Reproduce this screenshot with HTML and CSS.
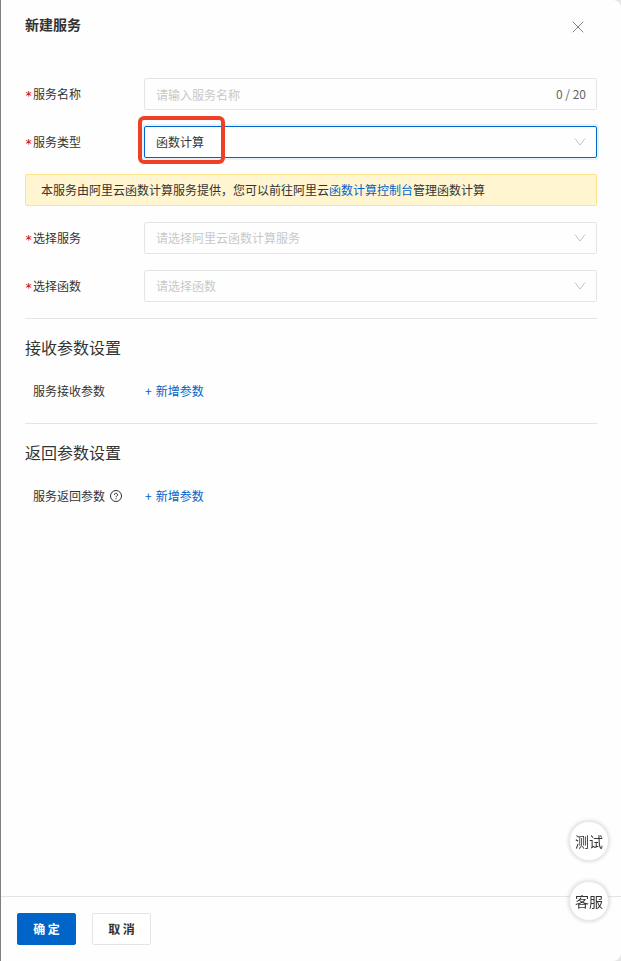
FILE: index.html
```html
<!DOCTYPE html>
<html lang="zh-CN">
<head>
    <meta charset="UTF-8">
    <meta name="viewport" content="width=device-width, initial-scale=1.0">
    <title>新建服务</title>
    <link rel="stylesheet" href="styles.css">
</head>
<body>
    <form class="drawer">
        <header class="drawer-header">
            <h1 class="drawer-title">新建服务</h1>
            <button type="button" class="btn-close" aria-label="关闭">
                <svg width="12" height="12" viewBox="0 0 12 12"><path d="M.7.7l10.6 10.6M11.3.7L.7 11.3"/></svg>
            </button>
        </header>

        <main class="drawer-body">
            <section class="form-section">
                <div class="form-item">
                    <label class="form-label" for="serviceName"><span class="required">*</span>服务名称</label>
                    <div class="control">
                        <input type="text" id="serviceName" class="field" placeholder="请输入服务名称" maxlength="20">
                        <span class="counter">0 / 20</span>
                    </div>
                </div>
                <div class="form-item">
                    <label class="form-label" for="serviceType"><span class="required">*</span>服务类型</label>
                    <div class="control">
                        <select id="serviceType" class="field active">
                            <option>函数计算</option>
                        </select>
                        <svg class="arrow" width="12" height="12" viewBox="0 0 12 12"><path d="M1 2.5L6 9l5-6.5"/></svg>
                        <span class="highlight"></span>
                    </div>
                </div>
                <div class="alert">本服务由阿里云函数计算服务提供，您可以前往阿里云<a href="#">函数计算控制台</a>管理函数计算</div>
                <div class="form-item">
                    <label class="form-label" for="service"><span class="required">*</span>选择服务</label>
                    <div class="control">
                        <select id="service" class="field" required>
                            <option value="">请选择阿里云函数计算服务</option>
                        </select>
                        <svg class="arrow" width="12" height="12" viewBox="0 0 12 12"><path d="M1 2.5L6 9l5-6.5"/></svg>
                    </div>
                </div>
                <div class="form-item">
                    <label class="form-label" for="func"><span class="required">*</span>选择函数</label>
                    <div class="control">
                        <select id="func" class="field" required>
                            <option value="">请选择函数</option>
                        </select>
                        <svg class="arrow" width="12" height="12" viewBox="0 0 12 12"><path d="M1 2.5L6 9l5-6.5"/></svg>
                    </div>
                </div>
            </section>

            <section class="form-section">
                <h2 class="section-title">接收参数设置</h2>
                <div class="form-item">
                    <span class="form-label optional">服务接收参数</span>
                    <button type="button" class="btn-link"><span>+</span>新增参数</button>
                </div>
            </section>

            <section class="form-section">
                <h2 class="section-title">返回参数设置</h2>
                <div class="form-item">
                    <span class="form-label optional">服务返回参数
                        <svg class="help" width="12" height="12" viewBox="0 0 12 12">
                            <circle cx="6" cy="6" r="5.5"/>
                            <path d="M4.4 4.9a1.6 1.5 0 1 1 2.4 1.2c-.6.3-.8.5-.8 1.1M6 8.2v1"/>
                        </svg>
                    </span>
                    <button type="button" class="btn-link"><span>+</span>新增参数</button>
                </div>
            </section>
        </main>

        <footer class="drawer-footer">
            <button type="submit" class="btn btn-primary">确 定</button>
            <button type="button" class="btn">取 消</button>
        </footer>
    </form>

    <div class="float-menu">
        <button type="button" class="float-btn">测试</button>
        <button type="button" class="float-btn">客服</button>
    </div>
</body>
</html>
```

FILE: styles.css
```css
:root {
    --text: #333;
    --placeholder: #c8c8c8;
    --border: #e5e5e5;
    --primary: #0064c8;
}

* {
    margin: 0;
    padding: 0;
    box-sizing: border-box;
}

body {
    background: #e5e5e5;
    color: var(--text);
    font-family: "Noto Sans CJK SC", sans-serif;
    font-size: 12px;
    line-height: 16px;
}

button, input, select {
    font: inherit;
    color: inherit;
}

button {
    cursor: pointer;
}

svg {
    fill: none;
    stroke: currentColor;
}

a {
    color: var(--primary);
    text-decoration: none;
}

/* Drawer */
.drawer {
    display: flex;
    flex-direction: column;
    min-height: 100vh;
    background: #fefefe;
    border-left: 1px solid #7f7f7f;
    border-radius: 0 8px 8px 0;
}

.drawer-header {
    display: flex;
    justify-content: space-between;
    align-items: flex-start;
    padding: 16px 32px 40px 24px;
}

.drawer-title {
    font-size: 14px;
    font-weight: 700;
}

.btn-close {
    display: flex;
    align-items: center;
    justify-content: center;
    width: 22px;
    height: 22px;
    border: none;
    background: none;
    color: #888;
}

.drawer-body {
    flex: 1;
    padding: 0 24px;
}

.drawer-footer {
    display: flex;
    gap: 16px;
    padding: 16px;
    border-top: 1px solid var(--border);
}

/* Form */
.form-section {
    display: flex;
    flex-direction: column;
    gap: 16px;
    padding-bottom: 16px;
}

.form-section + .form-section {
    border-top: 1px solid var(--border);
    padding-top: 16px;
}

.section-title {
    font-size: 16px;
    font-weight: 400;
    line-height: 24px;
}

.form-item {
    display: flex;
    align-items: center;
    gap: 16px;
    min-height: 32px;
}

.form-label {
    display: flex;
    align-items: center;
    flex: 0 0 103px;
    white-space: nowrap;
}

.form-label.optional {
    padding-left: 8px;
}

.required {
    width: 8px;
    padding-top: 4px;
    color: #c80000;
    font-family: "DejaVu Sans Mono", monospace;
}

.help {
    flex: none;
    margin-left: 5px;
}

.control {
    position: relative;
    flex: 1;
    min-width: 0;
}

.field {
    display: block;
    width: 100%;
    height: 32px;
    padding: 0 11px;
    border: 1px solid var(--border);
    border-radius: 2px;
    background: transparent;
    outline: none;
    appearance: none;
}

.field::placeholder {
    color: var(--placeholder);
    opacity: 1;
}

select.field:invalid {
    color: var(--placeholder);
}

.field.active {
    border-color: var(--primary);
    box-shadow: 0 0 0 2px #e6f3fd;
}

.counter,
.arrow {
    position: absolute;
    right: 11px;
    top: 50%;
    transform: translateY(-50%);
    pointer-events: none;
}

.counter {
    color: #666;
}

.arrow {
    color: #c0c0c0;
}

/* Red frame round the chosen value */
.highlight {
    position: absolute;
    top: -10px;
    left: -6px;
    width: 87px;
    height: 48px;
    border: 4px solid #ed4024;
    border-radius: 6px;
    pointer-events: none;
}

.alert {
    padding: 7px 15px;
    border: 1px solid #fde48c;
    border-radius: 2px;
    background: #fff5d0;
}

/* Buttons */
.btn {
    min-width: 59px;
    height: 32px;
    padding: 0 15px;
    border: 1px solid var(--border);
    border-radius: 2px;
    background: #fff;
    font-weight: 700;
}

.btn-primary {
    border-color: var(--primary);
    background: var(--primary);
    color: #fff;
}

.btn-link {
    display: flex;
    gap: 4px;
    border: 1px solid transparent;
    background: none;
    color: var(--primary);
}

.float-menu {
    position: fixed;
    right: 12px;
    bottom: 40px;
    display: flex;
    flex-direction: column;
    gap: 20px;
}

.float-btn {
    width: 40px;
    height: 40px;
    border: 1px solid #e8e8e8;
    border-radius: 50%;
    background: #fff;
    box-shadow: 0 0 4px rgba(0, 0, 0, 0.2);
    font-size: 14px;
}
```
